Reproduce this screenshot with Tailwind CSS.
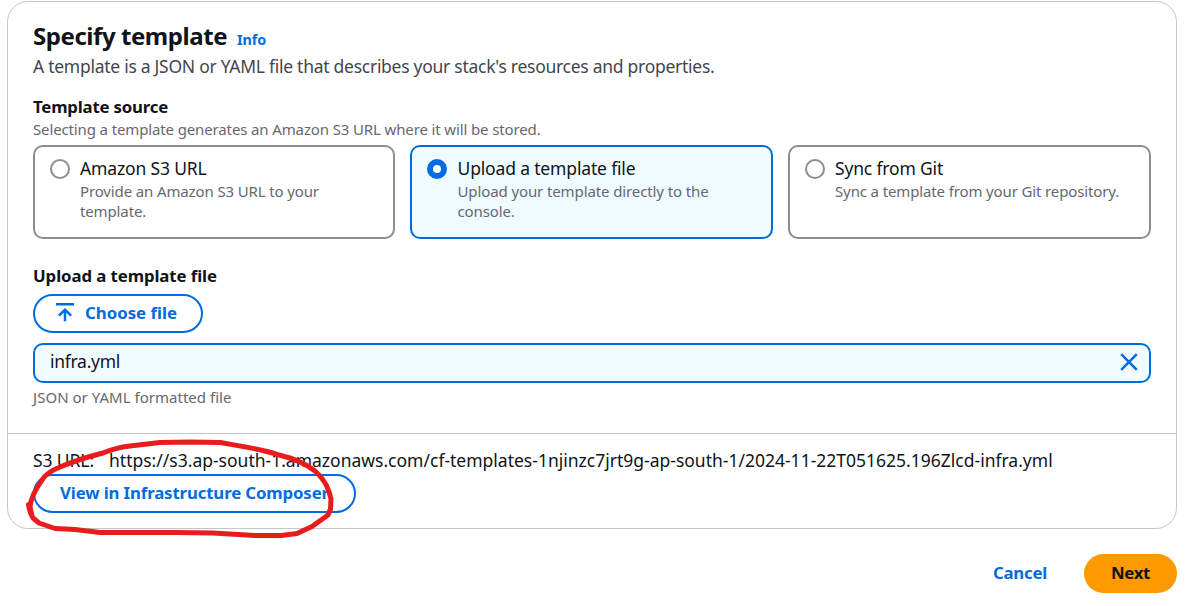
<!DOCTYPE html>
<html lang="en">
<head>
<meta charset="utf-8">
<title>Specify template</title>
<script src="https://cdn.jsdelivr.net/npm/@tailwindcss/browser@4"></script>
</head>
<body class="relative h-[606px] overflow-hidden bg-white font-['Noto_Sans','Open_Sans',sans-serif] text-[17.5px] leading-[25px] whitespace-nowrap text-[#0f141a]">
<main class="flex flex-col pt-px pl-[7px]">
  <section class="flex h-[528px] w-[1170px] flex-col rounded-[21px] border border-[#c6c6cd]">
    <div class="flex flex-col px-[25px] pt-[19px]">
      <header class="flex items-baseline gap-[10px]">
        <h1 class="text-[24px] leading-[30px] font-bold tracking-[-0.44px]">Specify template</h1>
        <a class="text-[14.4px] leading-5 font-bold tracking-[-0.13px] text-[#006ce0]">Info</a>
      </header>
      <p class="mt-[3px] tracking-[-0.27px] text-[#424650]">A template is a JSON or YAML file that describes your stack's resources and properties.</p>

      <h2 class="mt-[15px] text-[16.8px] font-bold tracking-[-0.19px]">Template source</h2>
      <p class="text-[15px] leading-5 tracking-[-0.13px] text-[#656871]">Selecting a template generates an Amazon S3 URL where it will be stored.</p>
      <div class="mt-[6px] flex">
        <label class="mr-[15px] flex h-[94px] w-[362px] gap-[10px] rounded-[10px] border-2 border-[#8c8c94] px-[15px] pt-[9px]">
          <span class="mt-[3px] size-5 shrink-0 rounded-full border-2 border-[#8c8c94]"></span>
          <span class="flex flex-col">
            <span class="tracking-[-0.15px]">Amazon S3 URL</span>
            <span class="text-[15px] leading-5 tracking-[-0.13px] text-[#656871]">Provide an Amazon S3 URL to your<br>template.</span>
          </span>
        </label>
        <label class="mr-[15px] flex h-[94px] w-[363px] gap-[10px] rounded-[10px] border-2 border-[#006ce0] bg-[#f0fbff] px-[15px] pt-[9px]">
          <span class="mt-[3px] size-5 shrink-0 rounded-full border-6 border-[#006ce0] bg-white"></span>
          <span class="flex flex-col pl-[0.5px]">
            <span class="tracking-[-0.16px]">Upload a template file</span>
            <span class="text-[15px] leading-5 tracking-[-0.11px] text-[#656871]">Upload your template directly to the<br>console.</span>
          </span>
        </label>
        <label class="flex h-[94px] w-[363px] gap-[10px] rounded-[10px] border-2 border-[#8c8c94] px-[15px] pt-[9px]">
          <span class="mt-[3px] size-5 shrink-0 rounded-full border-2 border-[#8c8c94]"></span>
          <span class="flex flex-col">
            <span class="tracking-[-0.17px]">Sync from Git</span>
            <span class="text-[15px] leading-5 tracking-[-0.13px] text-[#656871]">Sync a template from your Git repository.</span>
          </span>
        </label>
      </div>

      <h2 class="mt-6 text-[16.8px] font-bold tracking-[-0.08px]">Upload a template file</h2>
      <button class="mt-[6px] flex h-[39px] w-[170px] items-center gap-[10px] rounded-full border-2 border-[#006ce0] pb-[3px] pl-5 text-[16.8px] font-bold text-[#006ce0]">
        <svg class="size-5" viewBox="0 0 20 20" fill="none" stroke="currentColor" stroke-width="2.5"><path d="M1 2.2h18M10 19.2V8M3.9 13.7 10 7.7l6.1 6"/></svg>
        <span>Choose file</span>
      </button>
      <div class="mt-[10px] flex h-10 items-center justify-between rounded-[10px] border-2 border-[#006ce0] bg-[#f0fbff] pr-[11px] pl-[15px]">
        <span class="pb-[3px] tracking-[-0.28px]">infra.yml</span>
        <svg class="mb-[2px] size-[18px] text-[#006ce0]" viewBox="0 0 18 18" fill="none" stroke="currentColor" stroke-width="2.5"><path d="m1.2 1.2 15.6 15.6M16.8 1.2 1.2 16.8"/></svg>
      </div>
      <p class="mt-1 text-[15px] leading-5 tracking-[0.03px] text-[#656871]">JSON or YAML formatted file</p>
    </div>
    <div class="mt-[26px] flex flex-col items-start border-t border-[#c6c6cd] px-[25px] pt-[14px]">
      <p class="flex"><span class="w-[76px] tracking-[-0.1px]">S3 URL:</span><span>https://s3.ap-south-1.amazonaws.com/cf-templates-1njinzc7jrt9g-ap-south-1/2024-11-22T051625.196Zlcd-infra.yml</span></p>
      <button class="mt-px flex h-[39px] w-[323px] items-center rounded-full border-2 border-[#006ce0] pb-[3px] pl-[25px] text-[16.8px] font-bold tracking-[-0.13px] text-[#006ce0]">View in Infrastructure Composer</button>
    </div>
  </section>
  <footer class="mt-[25px] flex w-[1170px] items-center justify-end gap-[37px] text-[16.8px] font-bold">
    <button class="pb-[3px] tracking-[-0.24px] text-[#006ce0]">Cancel</button>
    <button class="h-[39px] w-[93px] rounded-full bg-[#ff9900] pb-[3px] tracking-[-0.33px]">Next</button>
  </footer>
</main>
<svg class="pointer-events-none absolute top-0 left-0" width="1191" height="606" viewBox="0 0 1191 606" fill="none" stroke="#e81c1c" stroke-width="5" stroke-linecap="round" stroke-linejoin="round">
  <path d="M28.5 504.500C29 509 30 513 33 518L39 523L55 528.500L75 529.500L100 532.500L175 532.500L213 533L255 535.500L281 535.500L297 533.500L312 526.500L328 515L330.500 509L331 499C329 490 326 481 315 471C305 463 292 458 279 455C262 449 240 446 220 442.500L190 442L160 442.500L130 446C117 447.500 110 450 103 453C87 457 72 462 60 467C50 471 45 475 42 480C37 487 31 496 30 507L32 516"/>
</svg>
</body>
</html>
